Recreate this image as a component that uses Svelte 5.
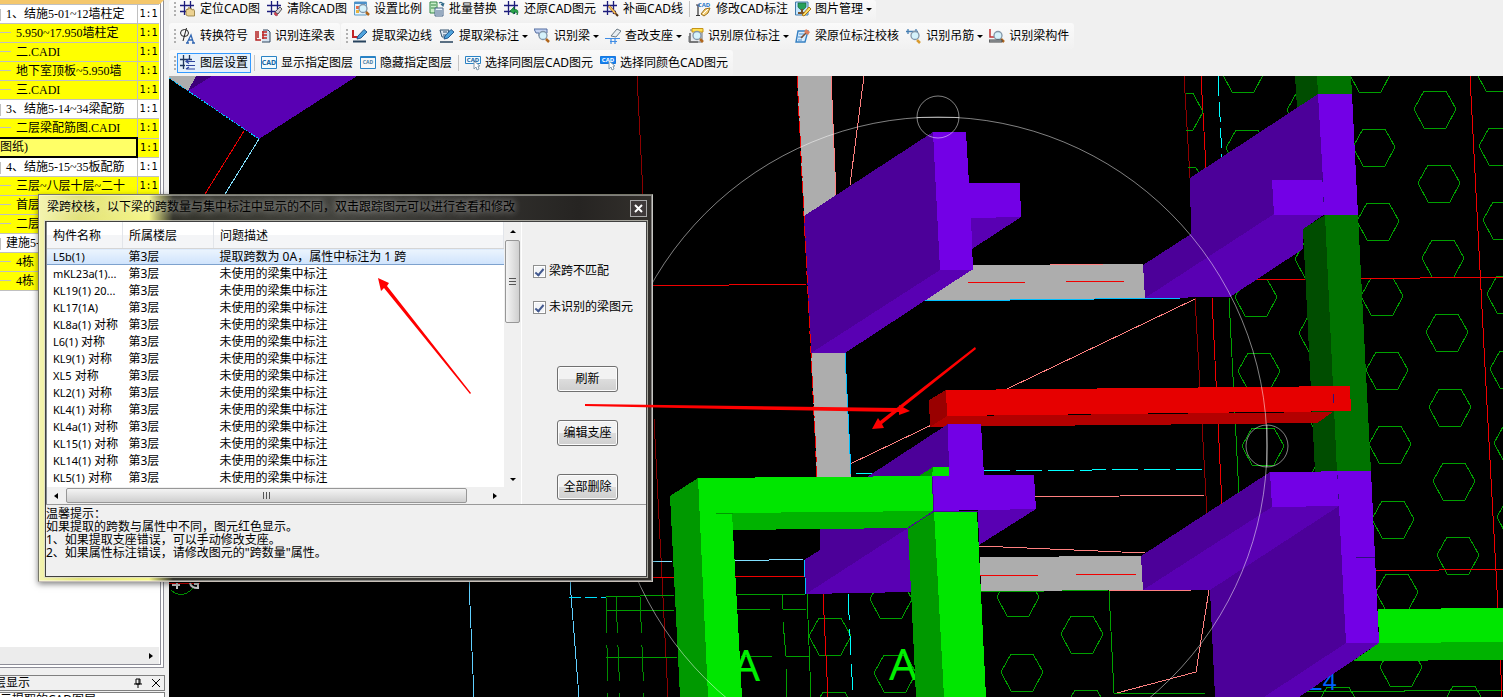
<script>
	const sheets = [
		{ name: '1、结施5-01~12墙柱定', ratio: '1:1', top: true },
		{ name: '5.950~17.950墙柱定', ratio: '1:1' },
		{ name: '二.CADI', ratio: '1:1' },
		{ name: '地下室顶板~5.950墙', ratio: '1:1' },
		{ name: '三.CADI', ratio: '1:1' },
		{ name: '3、结施5-14~34梁配筋', ratio: '1:1', top: true },
		{ name: '二层梁配筋图.CADI', ratio: '1:1' },
		{ name: '图纸)', ratio: '1:1', selected: true },
		{ name: '4、结施5-15~35板配筋', ratio: '1:1', top: true },
		{ name: '三层~八层十层~二十', ratio: '1:1' },
		{ name: '首层' },
		{ name: '二层' },
		{ name: '建施5-', top: true },
		{ name: '4栋' },
		{ name: '4栋' }
	];

	const toolbars = [
		[
			[
				{ icon: 'locate', label: '定位CAD图' },
				{ icon: 'clear', label: '清除CAD图' },
				{ icon: 'scale', label: '设置比例' },
				{ icon: 'replace', label: '批量替换' },
				{ icon: 'restore', label: '还原CAD图元' },
				{ icon: 'draw', label: '补画CAD线' },
				{ sep: true },
				{ icon: 'edit', label: '修改CAD标注' },
				{ icon: 'picture', label: '图片管理', menu: true }
			]
		],
		[
			[
				{ icon: 'symbol', label: '转换符号' },
				{ icon: 'table', label: '识别连梁表' }
			],
			[
				{ icon: 'edge', label: '提取梁边线' },
				{ icon: 'mark', label: '提取梁标注', menu: true },
				{ icon: 'beam', label: '识别梁', menu: true },
				{ icon: 'support', label: '查改支座', menu: true },
				{ icon: 'origin', label: '识别原位标注', menu: true },
				{ icon: 'check', label: '梁原位标注校核' },
				{ icon: 'hanger', label: '识别吊筋', menu: true },
				{ icon: 'member', label: '识别梁构件' }
			]
		],
		[
			[
				{ icon: 'layers', label: '图层设置', active: true },
				{ sep: true },
				{ icon: 'cad', label: '显示指定图层' },
				{ icon: 'cadhide', label: '隐藏指定图层' },
				{ sep: true },
				{ icon: 'cadpick', label: '选择同图层CAD图元' },
				{ icon: 'cadcolor', label: '选择同颜色CAD图元' }
			]
		]
	];

	// each stroke or area: [path, stroke, fill, stroke width]
	const grid = ['M0 4.500H14M0 10.500H13M4.500 0V14M10.500 0V13', '#1c1c7c', 'none', 1.3];
	const lens = ['M13 7.5A4 4 0 1 1 5 7.5A4 4 0 1 1 13 7.5', '#8396a8', '#d5f2fb', 1.3];
	const handle = ['M12 11L15 14', '#b0661c', 'none', 2.5];
	const pencil = ['M5 11L6 8L12 1.5L15 4L9 10Z', '#24598f', '#4fa3dc', 1];
	const icons = {
		locate: [grid, ['M6 14V9Q7 7 8 9V7Q9.500 5.500 10 8Q11.500 6 12 9Q14 7 14.500 10V15H8Z', '#8d7435', '#ecd292', 0.8]],
		clear: [grid, ['M8 11L13 6L15 8L11 13Z', '#555', '#d5ced8', 1], ['M8 11L11 14L9 15L7 13Z', '#8a3040', '#d43d4e', 0.5]],
		scale: [
			['M.5 1H12.500V14H.5Z', '#5b9bc7', '#e3f3fd', 1],
			['M.5 2H12', '#4a90cb', 'none', 2],
			['M2 5h3v3h-3z', 'none', '#e76b45', 0],
			['M7 4h3v3h-3z', 'none', '#62b550', 0],
			['M2 9h3v3h-3z', 'none', '#e8b33c', 0],
			lens,
			handle
		],
		replace: [
			['M1 1H8V12H1Z', '#358747', '#c8edc8', 1],
			['M2 4H7M2 7H7', '#358747', 'none', 1],
			['M6 7H14V15H6Z', '#486586', '#e8f2fb', 1],
			['M8 9V14M10 9V14M12 9V14', '#486586', 'none', 1],
			['M10 2Q14 0 14 5M12 3L14 5L15 2', '#356c8b', 'none', 1.2]
		],
		restore: [grid, ['M6 10L10 6V8.500Q16 8 13 14Q14 11 10 11V13Z', '#0b702a', '#2aa24b', 0.7]],
		draw: [grid, ['M6 5L13 13', '#8b541c', 'none', 2.6], ['M6 5L12 12', '#ffc95f', 'none', 1.3], ['M13 13L15 15', '#503010', 'none', 2]],
		edit: [
			['M2 4V14M0 4H4M0 14.500H4', '#333', 'none', 1.2],
			['M5 13L9 8L14 7L12 12L8 15Z', '#9b6f19', '#f6d27b', 1],
			['M7 13L12 8', '#fff', 'none', 1]
		],
		picture: [
			['M.5 1H13V14H.5Z', '#427baa', '#c2e5ff', 1],
			['M3 2H11V6Q7 12 3 6Z', '#16653c', '#28a05a', 0.7],
			['M7 8V12M3 12H10', '#79502b', 'none', 2],
			['M7 14L14 6L16 8L9 15Z', '#ac7614', '#ffe067', 1]
		],
		symbol: [
			['M8.500 5A4 3.500 0 1 1 .5 5A4 3.500 0 1 1 8.500 5M3 13L6.500 0', '#222', 'none', 1],
			['M7 15L11 7L13.500 15M8 12H13M6 15H9M12 15H15', '#3267b3', 'none', 1.3]
		],
		table: [
			['M8 2H13L15 4V14H7', '#30465e', '#d6e3f1', 1],
			['M1 3V12H6M3 3V10', '#b42222', 'none', 1.5],
			['M7 4H12M7 7H12M7 10H12M8 3V11', '#bf2929', 'none', 1.5]
		],
		edge: [['M1 2V9H6', '#c12525', 'none', 2], pencil, ['M1 13.500H14', '#26425d', 'none', 2]],
		mark: [['M1 2H10L8 9H3ZM4 4H8M4 7H7', '#33536f', '#dfe9f5', 1], pencil, ['M1 14H14', '#26425d', 'none', 1.5]],
		beam: [['M0 1H13V5H10V8H5V5H2Z', '#536da1', '#c5d4f2', 1], lens, handle],
		support: [
			['M6 8L12 1L16 3L11 9Z', '#6c7b86', '#e7edf2', 1],
			['M0 10.500H15M5 13.500H12M6 11V16M10 11V16', '#3f8ce5', 'none', 1.2]
		],
		origin: [
			['M2 2H14V14H1V8', '#6f7377', '#e8eaed', 1],
			['M4 .5H15V4H4Z', '#c59418', '#ffe052', 1],
			lens,
			handle,
			['M2 5V14H10', '#666', 'none', 1.5]
		],
		check: [
			['M3 3H13L10 14H1Z', '#3680c2', '#d9edff', 1.4],
			['M4 6H9M3 9H8M3 12H7', '#4e91cd', 'none', 1],
			['M6 10L13 3', '#794c32', 'none', 1.6],
			['M11 1L15 4L13 7L9 4Z', 'none', '#dd8060', 0]
		],
		hanger: [['M0 3.500H12M2 1V6M10 1V6', '#477fb2', 'none', 1.3], lens, ['M11 12L14 15', '#d99b2f', 'none', 2.5]],
		member: [['M1 1V9H5', '#c13636', 'none', 1.5], lens, handle, ['M0 12H13V14H0Z', '#444', '#bac2c8', 1]],
		layers: [
			['M0 4.500H12M3.500 0V14M9.500 0V5M0 10.500H5', '#20365e', 'none', 1.3],
			['M6 6.500H15M6 10.500H15M6 14H15M9 4L6 6.500L9 8.500M9 12L6 14', '#2f45a0', 'none', 1.2]
		],
		cad: [['M.5 1.500H15.500V13.500H.5Z', '#2a83c5', '#f2fbff', 1]],
		cadhide: [['M.5 1.500H15.500V13.500H.5Z', '#2a83c5', '#f7f7f7', 1], ['M1 2.500H15', '#2a83c5', 'none', 1]],
		cadpick: [['M.5 1.500H15.500V8.500H.5Z', '#2a83c5', '#f2fbff', 1], ['M9 6V14L11 12L12 15L14 14L13 11L15 11Z', '#829bad', '#fff', 1]],
		cadcolor: [['M.5 1.500H15.500V8.500H.5Z', '#1776dc', '#1684f2', 1], ['M9 6V14L11 12L12 15L14 14L13 11L15 11Z', '#829bad', '#fff', 1]]
	};

	const cadText = {
		edit: { y: 6, size: 6, color: '#2978c8' },
		cad: { y: 10, size: 7, color: '#1765a2' },
		cadhide: { y: 9, size: 5, color: '#477da4' },
		cadpick: { y: 7, size: 6, color: '#1765a2' },
		cadcolor: { y: 7, size: 6, color: '#ffffff' }
	};

	const beams = [
		{ code: 'L5b(1)', text: '提取跨数为 0A，属性中标注为 1 跨' },
		{ code: 'mKL23a(1)...' },
		{ code: 'KL19(1) 20...' },
		{ code: 'KL17(1A)' },
		{ code: 'KL8a(1)', note: '对称' },
		{ code: 'L6(1)', note: '对称' },
		{ code: 'KL9(1)', note: '对称' },
		{ code: 'XL5', note: '对称' },
		{ code: 'KL2(1)', note: '对称' },
		{ code: 'KL4(1)', note: '对称' },
		{ code: 'KL4a(1)', note: '对称' },
		{ code: 'KL15(1)', note: '对称' },
		{ code: 'KL14(1)', note: '对称' },
		{ code: 'KL5(1)', note: '对称' }
	];

	const piles = [
		[1243, 73], [1247, 148], [1256, 297], [1259, 371], [1263, 446],
		[1308, 110], [1316, 259], [1320, 333], [1324, 408], [1328, 482],
		[1370, 73], [1374, 147], [1378, 221], [1382, 296], [1387, 370], [1390, 444], [1393, 519], [1397, 592], [1401, 667],
		[1435, 109], [1439, 183], [1443, 258], [1447, 332], [1450, 407], [1454, 481], [1458, 555], [1464, 704],
		[1497, 72], [1500, 146], [1504, 220], [1508, 294], [1511, 369], [1515, 443], [1518, 517],
		[830, 636], [834, 710], [891, 599], [895, 673], [1018, 597], [1022, 672], [1082, 634], [1086, 708], [1338, 705]
	];

	// [path, colour, dash]
	const lines = [
		['M637 76L643 194M654 419L668 697', '#8c0000'],
		['M652 286L807 284M652 578L805 576', '#f00000'],
		['M864 76L850 185M1195 299L850 464M1035 497L1205 495M979 546L1145 553', '#ff8080'],
		['M1209 590L1196 672L1117 693', '#ff8080'],
		['M1184 76L1190 178M1195 298L1207 514', '#900000'],
		['M1201 76L1206 168M1212 298L1222 505M823 594L828 697', '#f00000'],
		['M1218 76L1222 158', '#00ffff', '20 6'],
		['M1229 298L1239 495M1109 590L1114 693H1205M1306 692L1503 690M980 592L1109 590', '#00a000'],
		['M1470 76L1486 386L1498 608L1502 697', '#f00000'],
		['M1255 280L1503 277M1376 571L1503 569', '#f00000'],
		['M856 473H873M984 471L1202 469', '#00ffff', '26 6'],
		['M652 562L672 561M735 561L804 559', '#80e0ff'],
		['M848 594L853 697', '#00ffff', '26 9'],
		['M469 582L474 697M570 582L579 697', '#60d0ff'],
		['M569 597H606', '#00e0ff', '12 4'],
		['M606 597L675 595M737 594H805M606 611L675 610M737 609H770M741 656H772M606 658L678 657', '#00a000'],
		['M616 597L620 697M606 597L608 697M640 597L644 697', '#008c00', '36 12'],
		['M782 595L783 609H806M783 622L786 656H809M786 669L787 697M807 593L811 697', '#00a000'],
		['M1186 93H1193L1203 112L1193 130H1186M1188 167H1195L1199 172', '#00a000'],
		['M244 131L205 194', '#f00000'],
		['M259 139L225 194', '#80e0ff'],
		['M169 583H200', '#e00000'],
		['M171 590Q182 600 193 588', '#008c00']
	];

	const solids = [
		['#adadad', '797,76 831,76 836,196 804,217'],
		['#adadad', '811,352 845,352 851,477 817,477'],
		['#adadad', '973,265 1143,264 1145,298 925,301'],
		['#adadad', '980,557 1141,556 1143,590 981,591'],
		['#adadad', '169,76 196,76 188,91 169,78'],
		['#3d007a', '196,76 212,76 188,91'],
		['#5900b3', '212,76 357,76 259,139 188,91'],
		['#4c0099', '933,132 804,216 811,353 940,270'],
		['#5900b3', '811,353 845,353 973,269 940,270'],
		['#5900b3', '971,218 1021,217 972,249'],
		['#7300e6', '933,132 966,132 969,183 1020,183 1021,217 971,218 973,270 940,270'],
		['#004d00', '1295,76 1317,76 1318,94 1297,108'],
		['#007300', '1317,76 1351,76 1352,94 1318,94'],
		['#4c0099', '1318,94 1190,178 1191,234 1143,265 1145,298 1274,215 1323,180'],
		['#5900b3', '1145,298 1230,297 1303,249 1303,229 1325,214 1274,214'],
		['#7300e6', '1318,94 1352,94 1358,215 1274,215 1272,180 1323,180'],
		['#004d00', '1303,229 1325,215 1337,472 1315,472'],
		['#007300', '1325,215 1358,215 1371,472 1337,472'],
		['#990000', '929,400 946,390 947,416 930,427'],
		['#b30000', '947,416 1333,412 1317,423 930,427'],
		['#e60000', '946,390 1350,386 1351,411 947,416'],
		['#4c0099', '948,424 867,477 950,477'],
		['#4c0099', '820,528 908,528 806,594 804,560 820,550'],
		['#5900b3', '908,528 911,592 806,594'],
		['#5900b3', '978,510 1036,509 979,545'],
		['#009900', '919,476 933,467 933,477'],
		['#00e600', '933,467 949,467 949,477 932,477'],
		['#009900', '698,478 670,496 680,697 709,697'],
		['#00b300', '716,513 934,511 908,528 733,530'],
		['#00e600', '698,478 932,476 934,511 732,513 742,697 708,697'],
		['#009900', '934,511 908,528 916,697 944,697'],
		['#00e600', '934,511 977,511 986,697 944,697'],
		['#7300e6', '948,424 981,424 984,475 1034,475 1036,509 934,511 932,476 949,476'],
		['#4c0099', '1270,472 1141,556 1143,590 1272,507'],
		['#5900b3', '1143,590 1210,590 1339,506 1272,507'],
		['#4c0099', '1339,506 1210,590 1215,697 1264,697 1346,643'],
		['#5900b3', '1346,643 1379,643 1299,697 1264,697'],
		['#00b300', '1379,643 1503,642 1503,660 1353,661'],
		['#00e600', '1378,609 1503,608 1503,642 1379,643'],
		['#7300e6', '1270,472 1371,471 1379,643 1346,643 1339,506 1272,507']
	];

	const marks = [
		['M968 283L1026 282M1066 282L1125 281', '#f00000'],
		['M980 575H1038M1076 574H1136', '#f00000'],
		['M925 301L1181 298M845 353L851 474M804 560L806 594', '#00bfff'],
		['M1050 264H1103M1109 590H1191M831 76L836 195', '#ff8080'],
		['M797 76L804 216L811 353L817 477', '#f00000', '12 3'],
		['M934 511L908 528M934 511L932 477M934 511H978', '#4c0099'],
		['M716 513H733', '#009900'],
		['M169 78L259 139', '#00bfff', '2 1'],
		['M1322 178V182M1323 197V202M1337 475V479M1338 494V499M1333 394V403M1356 557H1375', '#30107c']
	];

	let mismatch = true;
	let unrecognised = true;
	let selected = 0;
</script>

{#snippet icon(name)}
	<svg class="icon" viewBox="0 0 16 16" aria-hidden="true">
		{#each icons[name] as [d, stroke, fill, width]}
			<path {d} {stroke} {fill} stroke-width={width} />
		{/each}
		{#if cadText[name]}
			<text x="8" y={cadText[name].y} font-size={cadText[name].size} fill={cadText[name].color}>CAD</text>
		{/if}
	</svg>
{/snippet}

<div class="page">
	<aside>
		<div class="sheet-panel">
			<table class="sheets">
				<tbody>
					{#each sheets as sheet}
						<tr class:top={sheet.top} class:selected={sheet.selected}>
							<td class="name">{sheet.name}</td>
							<td>{sheet.ratio || ''}</td>
						</tr>
					{/each}
				</tbody>
			</table>
			<div class="sheet-scroll"><i class="arrow right"></i></div>
		</div>
		<div class="layer-title">
			<span>层显示</span>
			<button type="button" aria-label="固定">
				<svg width="10" height="10"><path d="M3 1H7V6H3ZM1 6H9M5 6V10M6 1V6" stroke="#000" fill="none" /></svg>
			</button>
			<button type="button" aria-label="关闭">
				<svg width="10" height="10"><path d="M1 1L9 9M9 1L1 9" stroke="#000" fill="none" /></svg>
			</button>
		</div>
		<div class="layer-list">示提取的CAD图层</div>
	</aside>

	<main>
		<div class="toolbars">
			{#each toolbars as row}
				<div class="row">
					{#each row as strip}
						<div class="strip">
							<i class="grip"></i>
							{#each strip as item}
								{#if item.sep}
									<i class="sep"></i>
								{:else}
									<button type="button" class:active={item.active}>
										{@render icon(item.icon)}
										<span>{item.label}</span>
										{#if item.menu}<i class="arrow down"></i>{/if}
									</button>
								{/if}
							{/each}
						</div>
					{/each}
				</div>
			{/each}
		</div>

		<svg class="model" viewBox="169 76 1334 621" preserveAspectRatio="xMinYMin slice">
			<g shape-rendering="crispEdges" fill="none">
				{#each piles as [x, y]}
					<path
						d="M{x - 21} {y}L{x - 11} {y - 18}H{x + 11}L{x + 21} {y}L{x + 11} {y + 19}H{x - 11}Z"
						stroke="#00a000"
					/>
				{/each}
				{#each lines as [d, stroke, dash]}
					<path {d} {stroke} stroke-dasharray={dash} />
				{/each}
			</g>
			<g class="axis">
				<text x="732" y="681">A</text>
				<text x="889" y="680">A</text>
				<text x="1309" y="690" class="blue">24</text>
			</g>
			<path d="M172 585H180M177 583V589M190 583Q191 588 198 588V584H194" stroke="#ccc" stroke-width="2" fill="none" />
			<g shape-rendering="crispEdges">
				{#each solids as [fill, points]}
					<polygon {fill} {points} />
				{/each}
				{#each marks as [d, stroke, dash]}
					<path {d} {stroke} stroke-dasharray={dash} fill="none" />
				{/each}
			</g>
			<g fill="none" stroke="#fff" stroke-opacity="0.5">
				<circle cx="938" cy="446" r="329" />
				<circle cx="938" cy="117" r="21" />
				<circle cx="1267" cy="446" r="21" />
				<path d="M917 117.500H959M1267 425V467" />
			</g>
		</svg>
	</main>

	<section class="dialog">
		<header>
			<h1>梁跨校核，以下梁的跨数量与集中标注中显示的不同，双击跟踪图元可以进行查看和修改</h1>
			<button type="button" aria-label="关闭">
				<svg width="9" height="9">
					<path d="M1 1L8 8M8 1L1 8" stroke="#fff" stroke-width="2" />
				</svg>
			</button>
		</header>
		<div class="client">
			<div class="body">
				<div class="list">
					<div class="rows">
						<table>
							<thead>
								<tr><th>构件名称</th><th>所属楼层</th><th>问题描述</th></tr>
							</thead>
							<tbody>
								{#each beams as beam, i}
									<tr class:selected={i === selected} on:click={() => (selected = i)}>
										<td><span class="code">{beam.code}</span> {beam.note || ''}</td>
										<td>第3层</td>
										<td>{beam.text || '未使用的梁集中标注'}</td>
									</tr>
								{/each}
							</tbody>
						</table>
						<div class="vscroll">
							<i class="arrow up"></i>
							<div class="thumb"><i></i></div>
							<i class="arrow down"></i>
						</div>
					</div>
					<div class="hscroll">
						<i class="arrow left"></i>
						<div class="thumb"><i></i></div>
						<i class="arrow right"></i>
					</div>
				</div>
				<div class="side">
					<label><input type="checkbox" bind:checked={mismatch} />梁跨不匹配</label>
					<label><input type="checkbox" bind:checked={unrecognised} />未识别的梁图元</label>
					<div class="actions">
						<button type="button">刷新</button>
						<button type="button">编辑支座</button>
						<button type="button">全部删除</button>
					</div>
				</div>
			</div>
			<div class="tips">
				<p>温馨提示：</p>
				<p>如果提取的跨数与属性中不同，图元红色显示。</p>
				<p>1、如果提取支座错误，可以手动修改支座。</p>
				<p>2、如果属性标注错误，请修改图元的"跨数量"属性。</p>
			</div>
		</div>
	</section>

	<svg class="pointers" aria-hidden="true">
		<path d="M378 278L389 283L387 286L471 393L470 394L384 288L381 291Z" />
		<path d="M585 404L899 408V405L910 411L899 415V412L780 410L585 406Z" />
		<path d="M872 429L878 418L880 421L975 347L976 349L882 424L884 428Z" />
	</svg>
</div>

<style>
	:global(body) {
		background: #f0f0f0;
	}
	.page {
		position: relative;
		display: flex;
		height: 100vh;
		overflow: hidden;
		font: 12px/16px 'Noto Sans', 'Noto Sans CJK SC', sans-serif;
		color: #000;
	}
	button {
		font: inherit;
		color: inherit;
		padding: 0;
		border: 0;
		background: none;
		white-space: nowrap;
	}
	table {
		border-collapse: collapse;
		table-layout: fixed;
		width: 100%;
	}
	td,
	th {
		padding: 0;
		text-align: left;
		font-weight: normal;
		white-space: nowrap;
		overflow: hidden;
	}
	.arrow {
		flex: none;
		width: 0;
		height: 0;
		border: 3px solid transparent;
	}
	.arrow.down {
		border-top-color: #000;
		border-bottom: 0;
	}
	.arrow.up {
		border-bottom-color: #000;
		border-top: 0;
	}
	.arrow.left {
		border-right: 4px solid #000;
		border-left: 0;
	}
	.arrow.right {
		border-left: 4px solid #000;
		border-right: 0;
	}

	aside {
		flex: none;
		display: flex;
		flex-direction: column;
		width: 165px;
		padding-right: 4px;
	}
	.sheet-panel {
		flex: 1;
		display: flex;
		flex-direction: column;
		justify-content: space-between;
		min-height: 0;
		background: #fff;
		border-top: 4px solid #f4c76c;
		border-right: 4px double #8e8e98;
		border-bottom: 4px double #8e8e98;
		margin-right: 1px;
		padding-right: 1px;
	}
	.sheets {
		font-family: 'Liberation Serif', 'Noto Sans CJK SC', sans-serif;
		border-top: 1px solid #c0c0c0;
	}
	.sheets td {
		height: 18px;
		line-height: 18px;
		background: #ff0;
		border-bottom: 1px solid #c0c0c0;
	}
	.sheets td:last-child {
		width: 22px;
		padding-left: 2px;
		box-sizing: border-box;
		border-left: 1px solid #c0c0c0;
		font-family: 'DejaVu Sans Mono', monospace;
		font-size: 10px;
	}
	.sheets .name {
		width: auto;
	}
	.sheets .name::before {
		content: '';
		display: inline-block;
		width: 11px;
		margin-right: 5px;
		vertical-align: 4px;
		border-top: 1px solid #c0c0c0;
	}
	.sheets .top td {
		background: #fff;
	}
	.sheets .top .name::before {
		width: 0;
		height: 12px;
		vertical-align: middle;
		border-top: 0;
		border-left: 1px solid #c0c0c0;
	}
	.sheets .selected .name {
		background: #ffff66;
		border: 2px solid #000;
		border-left: 0;
	}
	.sheets .selected td {
		height: 17px;
		line-height: 17px;
	}
	.sheets .selected .name::before {
		display: none;
	}
	.sheet-scroll {
		display: flex;
		align-items: center;
		justify-content: flex-end;
		height: 17px;
		padding-right: 6px;
		background: #ececec;
	}
	.layer-title {
		display: flex;
		align-items: center;
		gap: 8px;
		height: 14px;
		margin-top: 7px;
		padding-right: 3px;
		border: 1px solid #808080;
		border-left: 0;
	}
	.layer-title span {
		flex: 1;
		margin-left: -6px;
	}
	.layer-title svg {
		display: block;
	}
	.layer-list {
		height: 4px;
		line-height: 14px;
		margin-top: 1px;
		overflow: hidden;
		background: #fff;
		border: 1px solid #808080;
		border-width: 1px 1px 0 0;
	}

	main {
		flex: 1;
		min-width: 0;
		display: flex;
		flex-direction: column;
	}
	.toolbars {
		display: grid;
		gap: 1px;
	}
	.row {
		display: flex;
		gap: 1px;
		height: 26px;
	}
	.row:first-child {
		height: 22px;
	}
	.row:first-child .strip {
		padding-bottom: 4px;
	}
	.strip {
		display: flex;
		align-items: center;
		gap: 1px;
		padding: 0 2px 0 5px;
		border-radius: 3px;
		background: linear-gradient(#fafafa, #f1f1f1);
	}
	.strip button {
		display: flex;
		align-items: center;
		gap: 4px;
		height: 20px;
		padding: 0 2px;
		border: 1px solid transparent;
	}
	.strip .arrow {
		margin: 0 -1px;
	}
	.strip button.active {
		background: #e5f0fb;
		border-color: #3399ff;
	}
	.row:first-child button {
		height: 18px;
	}
	.icon {
		width: 16px;
		height: 16px;
	}
	.icon text {
		font-weight: bold;
		text-anchor: middle;
	}
	.grip {
		width: 2px;
		height: 14px;
		background: repeating-linear-gradient(#b0b0b0 0 2px, transparent 2px 4px);
	}
	.sep {
		width: 1px;
		height: 16px;
		margin: 0 2px;
		background: #c5c5c5;
	}
	.model {
		flex: 1;
		min-height: 0;
		width: 100%;
		background: #000;
	}
	.axis {
		font-size: 44px;
		fill: #00f000;
	}
	.axis .blue {
		font-size: 24px;
		fill: #0060ff;
	}

	.dialog {
		position: absolute;
		left: 38px;
		top: 194px;
		box-sizing: border-box;
		width: 615px;
		padding: 0 5px 4px 6px;
		border: 1px solid #77776a;
		border-right-color: #c8c8c4;
		border-bottom-color: #c8c0b8;
		background: linear-gradient(90deg, #f4f4b0 0, #e2e27a 40px, #f5f588 110px, #33332b 134px, #44443f 300px, #262422 540px, #33302c);
		box-shadow:
			inset 0 0 0 1px rgba(255, 255, 255, 0.4),
			0 2px 6px rgba(0, 0, 0, 0.5);
	}
	.dialog header {
		display: flex;
		align-items: center;
		justify-content: space-between;
		height: 26px;
		padding-left: 2px;
	}
	h1 {
		margin: 0;
		padding-bottom: 2px;
		font-size: 12px;
		font-weight: normal;
		text-shadow:
			0 0 6px rgba(255, 255, 255, 0.5),
			0 0 10px rgba(255, 255, 255, 0.4);
	}
	.dialog header button {
		display: grid;
		place-items: center;
		width: 17px;
		height: 17px;
		box-sizing: border-box;
		border: 1px solid #aaa;
		background: #3f3a3a;
	}
	.client {
		border: 1px solid #404040;
		outline: 1px solid rgba(220, 220, 210, 0.7);
		background: #f0f0f0;
		height: 354px;
	}
	.body {
		display: flex;
		height: 282px;
		border-bottom: 1px solid #999;
	}
	.list {
		display: flex;
		flex-direction: column;
		width: 474px;
		background: #fff;
		border-left: 1px solid #828790;
		border-right: 1px solid #fff;
	}
	.rows {
		flex: 1;
		display: flex;
		min-height: 0;
		overflow: hidden;
	}
	.rows table {
		flex: 1;
		align-self: flex-start;
		width: 0;
		line-height: 15px;
	}
	.rows th {
		height: 26px;
		padding-left: 6px;
		border-right: 1px solid #e2e5ea;
		border-bottom: 1px solid #d5d5d5;
		background: linear-gradient(#fff 50%, #f4f5f7 50%);
	}
	.rows th:nth-child(1) {
		width: 69px;
	}
	.rows th:nth-child(2) {
		width: 84px;
	}
	.rows td {
		height: 17px;
		padding-left: 6px;
	}
	.rows .selected td {
		height: 15px;
		border: solid #7da2ce;
		border-width: 1px 0;
		background: linear-gradient(#ebf4fd, #cfe3fc);
	}
	.code {
		font-size: 11px;
	}
	.vscroll {
		display: flex;
		flex-direction: column;
		align-items: center;
		width: 17px;
		padding: 8px 0 6px;
		box-sizing: border-box;
		background: #f0f0f0;
	}
	.thumb {
		display: grid;
		place-items: center;
		box-sizing: border-box;
		border: 1px solid #979797;
		border-radius: 2px;
	}
	.vscroll .thumb {
		width: 15px;
		height: 83px;
		margin: 7px 0 auto;
		background: linear-gradient(90deg, #f4f4f4, #cfcfcf);
	}
	.vscroll .thumb i {
		width: 7px;
		height: 8px;
		background: repeating-linear-gradient(#555 0 1px, transparent 1px 3px);
	}
	.hscroll {
		display: flex;
		align-items: center;
		height: 17px;
		padding: 0 24px 0 7px;
		background: #f0f0f0;
	}
	.hscroll .thumb {
		width: 401px;
		height: 15px;
		margin: 0 auto 0 8px;
		background: linear-gradient(#f4f4f4, #cfcfcf);
	}
	.hscroll .thumb i {
		width: 8px;
		height: 7px;
		background: repeating-linear-gradient(90deg, #555 0 1px, transparent 1px 3px);
	}
	.side {
		flex: 1;
		display: flex;
		flex-direction: column;
		gap: 20px;
		padding: 41px 10px 0 11px;
	}
	.side label {
		display: flex;
		align-items: center;
		gap: 3px;
		white-space: nowrap;
	}
	.side input {
		appearance: none;
		display: grid;
		place-items: center;
		box-sizing: border-box;
		width: 13px;
		height: 13px;
		margin: 0;
		border: 1px solid #8e8f8f;
		background: #f2f4f7;
		box-shadow: inset 0 0 0 1px #fff;
	}
	.side input:checked::after {
		content: '';
		width: 3px;
		height: 7px;
		border: solid #42588f;
		border-width: 0 2px 2px 0;
		transform: rotate(40deg);
	}
	.actions {
		display: grid;
		gap: 28px;
		justify-content: center;
		padding: 31px 0 0 6px;
	}
	.actions button {
		width: 61px;
		height: 26px;
		border: 1px solid #707070;
		border-radius: 3px;
		background: linear-gradient(#f2f2f2 50%, #dddddd 50%, #cfcfcf);
		box-shadow: inset 0 0 0 1px #fcfcfc;
	}
	.tips {
		padding-top: 2px;
		line-height: 13px;
	}
	.tips p {
		margin: 0;
	}
	.pointers {
		position: absolute;
		inset: 0;
		width: 100%;
		height: 100%;
		fill: #f00;
		pointer-events: none;
	}
</style>
